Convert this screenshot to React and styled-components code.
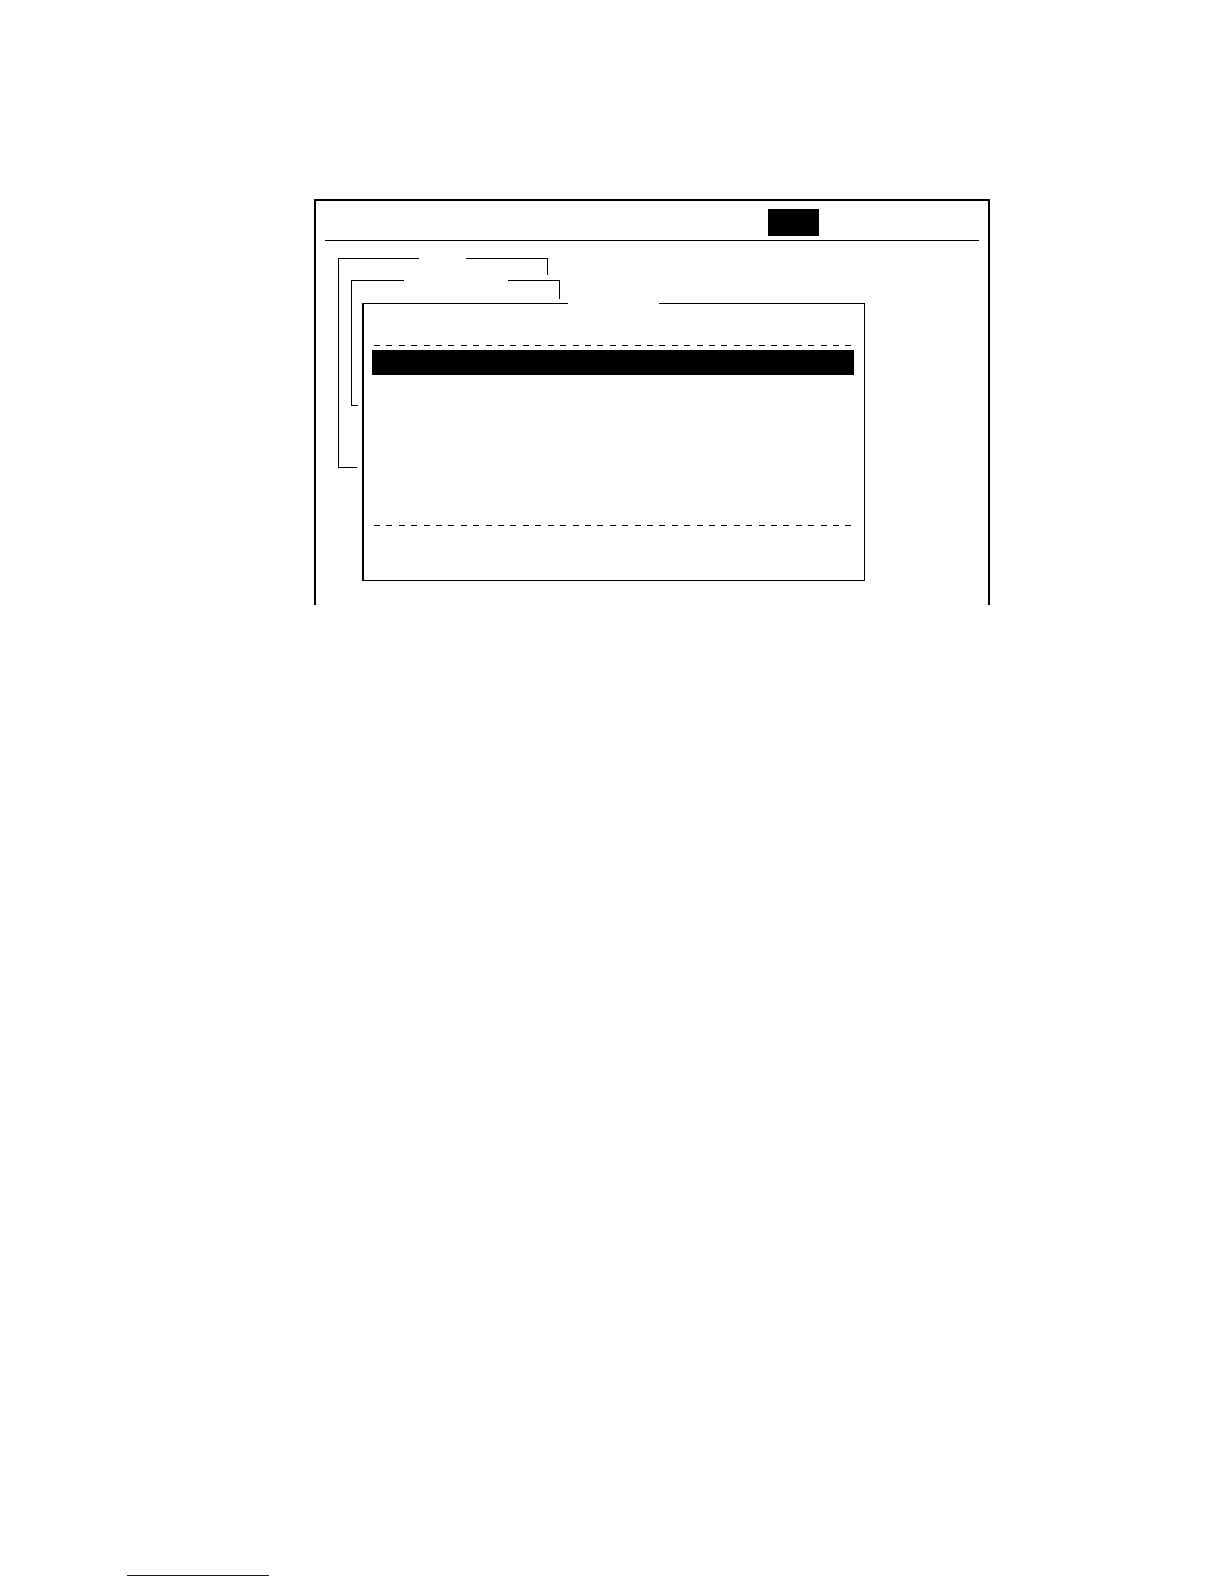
import React from "react";
import styled, { createGlobalStyle } from "styled-components";

const INK = "#000";

const GlobalStyle = createGlobalStyle`
  *, *::before, *::after { box-sizing: border-box; }
  body {
    margin: 0;
    background: #fff;
    font-family: "Liberation Sans", Arial, sans-serif;
  }
`;

const Page = styled.div`
  display: flex;
  flex-direction: column;
  justify-content: space-between;
  min-height: 100vh;
  padding: 199px 0 8px;
`;

const Screen = styled.main`
  margin: 0 234px 0 314px;
  padding: 8px 9px 0;
  border: 2px solid ${INK};
  border-bottom: 0;
`;

const MenuBar = styled.header`
  display: flex;
  justify-content: flex-end;
  padding: 0 160px 4px 0;
  border-bottom: 1px solid ${INK};
`;

const ActiveMenu = styled.div`
  width: 51px;
  height: 27px;
  background: ${INK};
`;

const Cascade = styled.div`
  display: grid;
  justify-items: start;
  align-items: start;
  padding: 17px 0 24px 13px;

  > * {
    grid-area: 1 / 1;
  }
`;

const BackWindow = styled.section`
  margin: ${(p) => p.$inset};
`;

const BackTop = styled.div`
  display: flex;
  justify-content: space-between;
  width: ${(p) => p.$width}px;
  height: ${(p) => p.$height}px;
`;

const Corner = styled.div`
  width: ${(p) => p.$width}px;
  border-top: 1px solid ${INK};
  border-left: ${(p) => (p.$side === "left" ? `1px solid ${INK}` : "0")};
  border-right: ${(p) => (p.$side === "right" ? `1px solid ${INK}` : "0")};
`;

const BackSide = styled.div`
  width: ${(p) => p.$width}px;
  height: ${(p) => p.$height}px;
  border-left: 1px solid ${INK};
  border-bottom: 1px solid ${INK};
`;

const FrontWindow = styled.section`
  width: 503px;
  max-width: 100%;
  margin: 45px 0 0 24px;
  border: solid ${INK};
  border-width: 0 1px 1px 2px;
`;

const TitleEdge = styled.div`
  display: grid;
  grid-template-columns: 204px 1fr;
  column-gap: 91px;
`;

const Line = styled.div`
  height: 1px;
  background: ${INK};
`;

const FrontBody = styled.div`
  padding: 0 10px 0 8px;
`;

const Area = styled.div`
  min-height: ${(p) => p.$height}px;
`;

const DashRow = styled.div`
  display: flex;
  justify-content: space-between;
  margin: 0 2px;
`;

const Dash = styled(Line)`
  width: 6px;
`;

const List = styled.div`
  min-height: 179px;
  padding-top: 4px;
`;

const SelectedRow = styled.div`
  height: 25px;
  background: ${INK};
`;

const Footer = styled.footer`
  display: flex;
  padding-left: 127px;
`;

const FooterLink = styled.a`
  width: 142px;
  height: 20px;
  border-bottom: 1px solid #0c0c8c;
`;

const DASHES = Array.from({ length: 39 }, (_, i) => i);

function DashedRule() {
  return (
    <DashRow>
      {DASHES.map((i) => (
        <Dash key={i} />
      ))}
    </DashRow>
  );
}

function CoveredWindow({ inset, width, topHeight, left, right, stub, sideHeight }) {
  return (
    <BackWindow $inset={inset}>
      <BackTop $width={width} $height={topHeight}>
        <Corner $side="left" $width={left} />
        <Corner $side="right" $width={right} />
      </BackTop>
      <BackSide $width={stub} $height={sideHeight} />
    </BackWindow>
  );
}

export default function App() {
  return (
    <>
      <GlobalStyle />
      <Page>
        <Screen>
          <MenuBar>
            <ActiveMenu />
          </MenuBar>
          <Cascade>
            <CoveredWindow inset="0" width={210} topHeight={17} left={81} right={82} stub={19} sideHeight={193} />
            <CoveredWindow inset="22px 0 0 13px" width={209} topHeight={19} left={53} right={52} stub={7} sideHeight={107} />
            <FrontWindow>
              <TitleEdge>
                <Line />
                <Line />
              </TitleEdge>
              <FrontBody>
                <Area $height={41} />
                <DashedRule />
                <List>
                  <SelectedRow />
                </List>
                <DashedRule />
                <Area $height={54} />
              </FrontBody>
            </FrontWindow>
          </Cascade>
        </Screen>
        <Footer>
          <FooterLink href="#top" aria-label="Back to top" />
        </Footer>
      </Page>
    </>
  );
}
